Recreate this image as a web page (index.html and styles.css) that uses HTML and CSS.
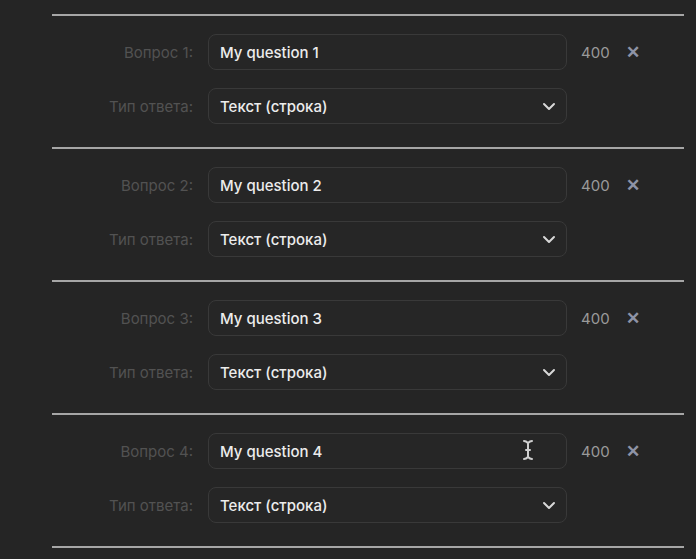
FILE: index.html
```html
<!DOCTYPE html>
<html lang="ru">
<head>
<meta charset="utf-8">
<link rel="stylesheet" href="styles.css">
</head>
<body>
<div class="list">
  <section class="item">
    <div class="row">
      <label class="label">Вопрос 1:</label>
      <div class="field"><span class="value">My question 1</span></div>
      <span class="count">400</span>
      <span class="remove">✕</span>
    </div>
    <div class="row">
      <label class="label">Тип ответа:</label>
      <div class="field select"><span class="value">Текст (строка)</span>
        <svg class="chev" width="14" height="9" viewBox="0 0 14 9"><path d="M2 2 L7 7 L12 2" fill="none" stroke="#d8d8d8" stroke-width="2" stroke-linecap="round" stroke-linejoin="round"/></svg>
      </div>
    </div>
  </section>
  <section class="item">
    <div class="row">
      <label class="label">Вопрос 2:</label>
      <div class="field"><span class="value">My question 2</span></div>
      <span class="count">400</span>
      <span class="remove">✕</span>
    </div>
    <div class="row">
      <label class="label">Тип ответа:</label>
      <div class="field select"><span class="value">Текст (строка)</span>
        <svg class="chev" width="14" height="9" viewBox="0 0 14 9"><path d="M2 2 L7 7 L12 2" fill="none" stroke="#d8d8d8" stroke-width="2" stroke-linecap="round" stroke-linejoin="round"/></svg>
      </div>
    </div>
  </section>
  <section class="item">
    <div class="row">
      <label class="label">Вопрос 3:</label>
      <div class="field"><span class="value">My question 3</span></div>
      <span class="count">400</span>
      <span class="remove">✕</span>
    </div>
    <div class="row">
      <label class="label">Тип ответа:</label>
      <div class="field select"><span class="value">Текст (строка)</span>
        <svg class="chev" width="14" height="9" viewBox="0 0 14 9"><path d="M2 2 L7 7 L12 2" fill="none" stroke="#d8d8d8" stroke-width="2" stroke-linecap="round" stroke-linejoin="round"/></svg>
      </div>
    </div>
  </section>
  <section class="item">
    <div class="row">
      <label class="label">Вопрос 4:</label>
      <div class="field"><span class="value">My question 4</span>
        <svg class="ibeam" width="12" height="22" viewBox="0 0 12 22"><path d="M2 2 C4 2 5 3 6 4 C7 3 8 2 10 2 M6 4 L6 18 M2 20 C4 20 5 19 6 18 C7 19 8 20 10 20 M4 11 L8 11" fill="none" stroke="#cfcfcf" stroke-width="2" stroke-linecap="round"/></svg>
      </div>
      <span class="count">400</span>
      <span class="remove">✕</span>
    </div>
    <div class="row">
      <label class="label">Тип ответа:</label>
      <div class="field select"><span class="value">Текст (строка)</span>
        <svg class="chev" width="14" height="9" viewBox="0 0 14 9"><path d="M2 2 L7 7 L12 2" fill="none" stroke="#d8d8d8" stroke-width="2" stroke-linecap="round" stroke-linejoin="round"/></svg>
      </div>
    </div>
  </section>
  <div class="endline"></div>
</div>
</body>
</html>
```
FILE: styles.css
```css
html, body {
  margin: 0;
  padding: 0;
  background: #252525;
  height: 100%;
  overflow: hidden;
}
body {
  font-family: Inter, "Noto Sans", "Liberation Sans", sans-serif;
}
.list {
  padding: 14px 12px 0 52px;
}
.item {
  border-top: 2px solid #a6a6a6;
  padding: 18px 0 23px;
  display: flex;
  flex-direction: column;
  gap: 18px;
}
.endline {
  border-top: 2px solid #a6a6a6;
}
.row {
  display: flex;
  align-items: center;
  height: 36px;
}
.label {
  width: 141px;
  text-align: right;
  color: #525252;
  font-size: 15px;
  margin-right: 15px;
}
.field {
  position: relative;
  box-sizing: border-box;
  width: 359px;
  height: 36px;
  border: 1px solid #393939;
  border-radius: 8px;
  background: #262626;
  display: flex;
  align-items: center;
  padding: 0 11px;
}
.value {
  color: #ececec;
  font-size: 15px;
  font-weight: 500;
}
.select {
  justify-content: space-between;
  padding-right: 10px;
}
.count {
  margin-left: 14px;
  color: #9a9a9a;
  font-size: 15px;
}
.remove {
  margin-left: 16px;
  color: #8e93a6;
  font-size: 17px;
  font-weight: 700;
}
.ibeam {
  position: absolute;
  left: 313px;
  top: 5px;
}
```
